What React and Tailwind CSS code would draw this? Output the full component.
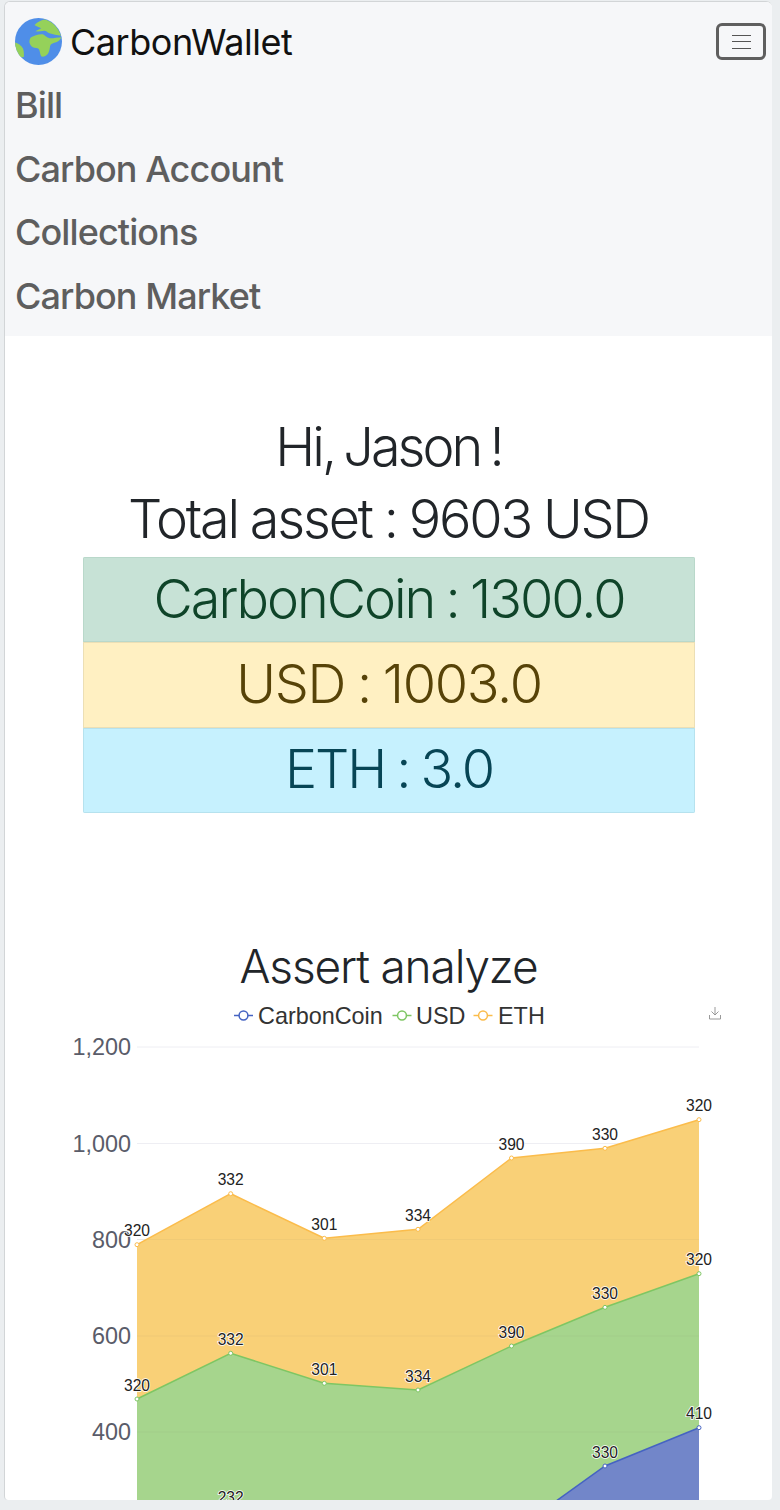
const navLinks = ['Bill', 'Carbon Account', 'Collections', 'Carbon Market']

const balances = [
  { label: 'CarbonCoin : 1300.0', cls: 'bg-[#c7e2d6] border-[#b9d8ca] text-[#0f4429] tracking-[-2px]' },
  { label: 'USD : 1003.0', cls: 'bg-[#fff0c2] border-[#ecdfb5] text-[#574308] tracking-[-1.3px]' },
  { label: 'ETH : 3.0', cls: 'bg-[#c6f1fe] border-[#b6e2ee] text-[#074555] tracking-[-2.1px]' },
]

const xs = [137, 230.7, 324.3, 418, 511.5, 605, 699]

const series = [
  {
    name: 'ETH',
    line: '#fbbc4b',
    fill: '#f9d077',
    ys: [1244.7, 1193.7, 1238.3, 1229.3, 1158, 1148.3, 1119.7],
    labels: [320, 332, 301, 334, 390, 330, 320],
  },
  {
    name: 'USD',
    line: '#7ec663',
    fill: '#a6d58d',
    ys: [1399, 1353.3, 1383.3, 1390, 1346, 1307.3, 1273.7],
    labels: [320, 332, 301, 334, 390, 330, 320],
  },
  {
    name: 'CarbonCoin',
    line: '#4563c2',
    fill: '#7286c9',
    ys: [1560, 1511, 1570, 1580, 1533, 1466, 1427.7],
    labels: [null, 232, null, null, null, 330, 410],
  },
]

const grid = [
  { y: 1047, label: '1,200' },
  { y: 1143.5, label: '1,000' },
  { y: 1239.5, label: '800' },
  { y: 1336, label: '600' },
  { y: 1432, label: '400' },
]

const legend = [
  { x: 243.5, textX: 258, name: 'CarbonCoin', color: '#4563c2' },
  { x: 402, textX: 416, name: 'USD', color: '#7ec663' },
  { x: 483, textX: 498, name: 'ETH', color: '#fbbc4b' },
]

function Globe() {
  return (
    <svg width="47" height="47" viewBox="0 0 47 47" className="shrink-0">
      <defs>
        <clipPath id="globe-clip">
          <circle cx="23.5" cy="23.5" r="23.5" />
        </clipPath>
      </defs>
      <circle cx="23.5" cy="23.5" r="23.5" fill="#4f8ee8" />
      <g clipPath="url(#globe-clip)" fill="#95d15a">
        <path d="M19.5 7 C22 4 26 2.5 29.5 1.5 C37 3 43 9 46 17.7 C42 17 38 16.5 34.5 15.3 C32 14 31 12.7 29.5 12.7 C26 13 23 13.6 20.5 13.3 C22 12 24.5 11.5 26.2 10.3 C24 9 21.5 8.5 19.5 7 Z" />
        <path d="M16.2 19.3 C19 17.5 24 15.8 27.8 16.3 C30 17 32 20 34.5 20.3 C38 20.6 42 19.5 46.5 19.3 C45 22 43.5 23.5 41.2 24.3 C38.5 25.2 36 25.6 35.2 27.7 C34.6 30.5 34.5 33.5 32.8 36 C31 38 28 39.3 26.2 38.3 C24.8 36 25.2 33 23.8 31 C22.5 29.6 19.8 30.2 17.8 29.3 C15.5 27.5 14 25 14.5 22.7 C14.8 21.2 15.2 20 16.2 19.3 Z" />
        <path d="M-1 24.3 C2 25 6 27 7.8 30.3 C9 33 9 36 8.8 39 L0 40 Z" />
      </g>
    </svg>
  )
}

function Chart() {
  const pts = (ys) => xs.map((x, i) => `${x},${ys[i]}`).join(' ')
  return (
    <svg
      width="767"
      height="504"
      viewBox="5 996 767 504"
      className="block"
      fontFamily="'Liberation Sans', Arial, sans-serif"
    >
      {legend.map((l) => (
        <g key={l.name}>
          <line x1={l.x - 9.5} x2={l.x + 9.5} y1="1015.5" y2="1015.5" stroke={l.color} strokeWidth="1.5" />
          <circle cx={l.x} cy="1015.5" r="4.4" fill="#fff" stroke={l.color} strokeWidth="1.5" />
          <text x={l.textX} y="1024" fontSize="23.4" fill="#333">{l.name}</text>
        </g>
      ))}

      {/* save-as-image icon */}
      <g fill="none" stroke="#8f8f8f" strokeWidth="0.9">
        <path d="M715 1007 V1015 M711.5 1011.5 L715 1015 L718.5 1011.5" />
        <path d="M709.5 1015 V1019 H720.5 V1015" />
      </g>

      {grid.map((g) => (
        <g key={g.label}>
          <line x1="137" x2="699" y1={g.y} y2={g.y} stroke="#eeeef3" strokeWidth="1" />
          <text x="131" y={g.y + 8} fontSize="23.4" textAnchor="end" fill="#5a5c69">{g.label}</text>
        </g>
      ))}

      {series.map((s) => (
        <polygon key={s.name} points={`137,1600 ${pts(s.ys)} 699,1600`} fill={s.fill} />
      ))}

      {grid.slice(2).map((g) => (
        <line key={g.label} x1="137" x2="699" y1={g.y} y2={g.y} stroke="#8a8a60" strokeOpacity="0.08" strokeWidth="1" />
      ))}

      {series.map((s) => (
        <g key={s.name}>
          <polyline points={pts(s.ys)} fill="none" stroke={s.line} strokeWidth="1.5" />
          {xs.map((x, i) => (
            <circle key={x} cx={x} cy={s.ys[i]} r="2" fill="#fff" stroke={s.line} strokeWidth="1" />
          ))}
          {xs.map((x, i) =>
            s.labels[i] === null ? null : (
              <text
                key={x}
                x={x}
                y={s.ys[i] - 8.5}
                fontSize="15.6"
                textAnchor="middle"
                fill="#222"
                stroke="#fff"
                strokeWidth="1.6"
                paintOrder="stroke"
              >
                {s.labels[i]}
              </text>
            )
          )}
        </g>
      ))}
    </svg>
  )
}

export default function App() {
  return (
    <div className="w-[780px] h-[1510px] overflow-hidden bg-[#ebeef0] font-['Inter',sans-serif] text-[#212529]">
      <div className="ml-1 mt-px w-[768px] h-[1499px] overflow-hidden rounded-t-[6px] rounded-b-[4px] bg-white border-t border-l border-[#d2d5d7]">
        <nav className="bg-[#f6f7f9] h-[334px] pl-[10px] pr-[6px]">
          <div className="h-[71px] pt-2 flex justify-between items-center">
            <a className="flex items-center gap-2 text-[36px] tracking-[-0.45px] text-[#111]">
              <Globe />
              <span>CarbonWallet</span>
            </a>
            <button className="w-[50px] h-[37px] border-[3px] border-[#5f5f5f] rounded-[6px] flex flex-col items-center justify-center gap-[5.5px]">
              <span className="block w-[19px] h-px bg-[#555]" />
              <span className="block w-[19px] h-px bg-[#555]" />
              <span className="block w-[19px] h-px bg-[#555]" />
            </button>
          </div>
          {navLinks.map((link) => (
            <div key={link} className="h-[63.7px] flex items-center text-[36px] font-medium tracking-[-0.9px] text-[#5e5e5e]">
              {link}
            </div>
          ))}
        </nav>

        <section className="pt-[75px] text-center font-light text-[54px] leading-[72px]">
          <div className="tracking-[-3px] [word-spacing:-3px]">Hi, Jason !</div>
          <div className="tracking-[-2.2px] [word-spacing:-1px]">Total asset : 9603 USD</div>
        </section>

        <ul className="mt-[2px] mx-[78px] w-[612px] rounded-[2px] overflow-hidden">
          {balances.map((b) => (
            <li key={b.label} className={`h-[85.3px] pb-[3px] flex items-center justify-center border text-[54px] font-light [word-spacing:-2px] ${b.cls}`}>
              {b.label}
            </li>
          ))}
        </ul>

        <h2 className="mt-[123px] h-[60px] leading-[60px] text-center text-[46px] font-light tracking-[-1.15px]">Assert analyze</h2>
        <Chart />
      </div>
    </div>
  )
}
